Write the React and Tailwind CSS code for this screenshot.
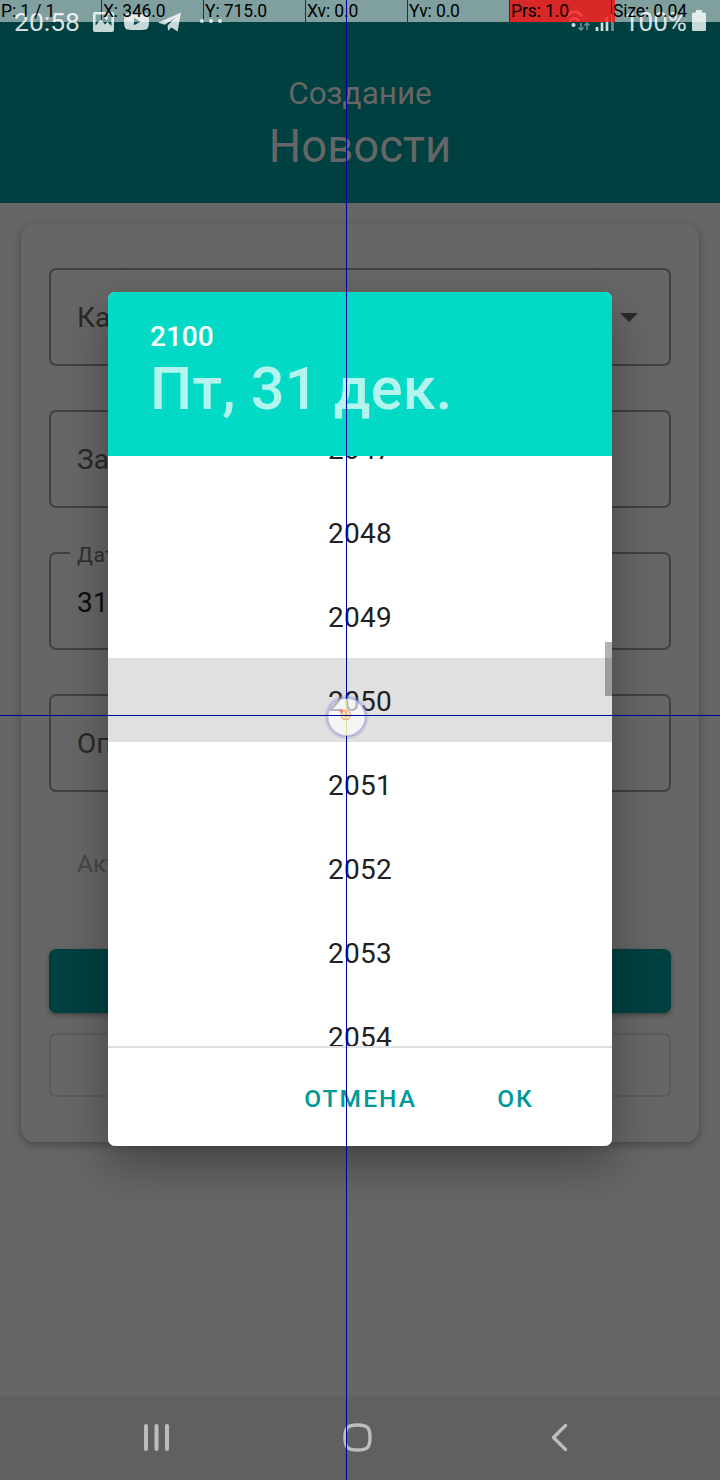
import React from "react";

const FIELD = "relative flex h-[98px] items-center rounded-[7px] border-2 border-[#404040] pl-[26px] pt-[2px] text-[28px] text-[#292929]";

const YEARS = [2047, 2048, 2049, 2050, 2051, 2052, 2053, 2054];

const STATS = ["P: 1 / 1", "X: 346.0", "Y: 715.0", "Xv: 0.0", "Yv: 0.0", "Prs: 1.0", "Size: 0.04"];

function StatusBar() {
  return (
    <div className="flex h-[44px] items-center justify-between pl-[14px] pr-[14px] text-left text-[#d5dfdf]">
      <div className="flex items-center">
        <span className="w-[78px] text-[26.5px] leading-[44px]">20:58</span>
        <svg className="h-[44px] w-[140px]" viewBox="92 0 140 44" fill="#c8d7d7">
          <path fillRule="evenodd" d="M95 12h17q2 0 2 2v16q0 2-2 2H95q-2 0-2-2V14q0-2 2-2Zm.6 2.6v11l5.400-6 4 5 2.500-2.800 3.900 4V14.600Z" />
          <circle cx="106.500" cy="18" r="1.800" />
          <path fillRule="evenodd" d="M127 13.500q9.500-1 19 0 3 .4 3 8t-3 8q-9.500 1-19 0-3-.4-3-8t3-8Zm7 4.200v7.600l6.500-3.800Z" />
          <path d="M158 22.800 181 12.600 177.600 31.500 171.500 27.500 168 30.800 167.600 25.500 175.500 17.500 165 24.800Z" />
          <circle cx="202" cy="21" r="2" />
          <circle cx="211" cy="21" r="2" />
          <circle cx="220" cy="21" r="2" />
        </svg>
      </div>
      <div className="flex items-center">
        <svg className="mr-[6px] h-[44px] w-[52px]" viewBox="566 0 52 44" fill="none">
          <path d="M566.500 16.500q8-9.500 16 0M569.500 21q5-5.500 9.500 0" stroke="#d5dfdf" strokeWidth="2.600" />
          <circle cx="573.500" cy="25" r="2" fill="#d5dfdf" />
          <path d="M581 23v7m-2.500-2.500L581 30l2.500-2.500M587 30v-7m-2.500 2.500L587 23l2.500 2.500" stroke="#6f9292" strokeWidth="1.500" />
          <path d="M597 27v4M602 22.500V31M607 17v14" stroke="#d5dfdf" strokeWidth="2.600" />
          <path d="M612.500 14v17" stroke="#6f9292" strokeWidth="2.600" />
        </svg>
        <span className="mr-[6px] w-[62px] whitespace-nowrap text-right text-[26px] leading-[44px]">100%</span>
        <svg className="h-[44px] w-[14px]" viewBox="692 0 14 44" fill="#c8d7d7">
          <path d="M696 10h6v2.500h2.500q1.500 0 1.500 1.500v15.500q0 1.500-1.500 1.500h-11q-1.500 0-1.500-1.500V14q0-1.500 1.500-1.500H696Z" />
        </svg>
      </div>
    </div>
  );
}

function PointerStats() {
  return (
    <div className="absolute left-0 top-0 grid h-[22px] w-[720px] grid-cols-[repeat(7,102px)] text-[17.5px] leading-[22px] tracking-[-0.12px] text-black">
      {STATS.map((s, i) => (
        <div key={s} className="flex pr-px">
          <div
            className={
              i === 5
                ? "w-[101px] whitespace-nowrap bg-[#ff2424]/85 pl-[1px]"
                : i === 6
                ? "w-[108px] shrink-0 whitespace-nowrap bg-[linear-gradient(to_right,rgba(255,34,34,.85)_3px,rgba(255,255,255,.5)_3px)] pl-[1px]"
                : "w-[101px] whitespace-nowrap bg-white/50 pl-[1px]"
            }
          >
            {s}
          </div>
        </div>
      ))}
    </div>
  );
}

function Form() {
  return (
    <div className="mx-[21px] mt-[21px] flex h-[918px] flex-col rounded-[14px] bg-[#666666] px-[28px] pt-[44px] shadow-[0_3px_8px_rgba(0,0,0,0.3)]">
      <div className="flex flex-col gap-[44px]">
        <div className={FIELD}>
          Ка
          <span className="mb-[1px] ml-auto mr-[31px] border-x-[9px] border-t-[9px] border-x-transparent border-t-[#292929]" />
        </div>
        <div className={FIELD}>За</div>
        <div className={FIELD}>
          <span className="absolute left-[19px] top-[-13px] bg-[#666666] px-[7px] text-[21px] leading-[28px] tracking-[0.6px] text-[#2d2d2d]">Дата</span>
          <span className="pt-[2px] text-[#0d0d0d]">31</span>
        </div>
        <div className={FIELD}>Оп</div>
      </div>
      <div className="flex h-[157px] items-center pb-[12px] pl-[28px] text-[24.5px] text-[#474747]">Акт</div>
      <div className="h-[64px] rounded-[7px] bg-[#004040] shadow-[0_2px_5px_rgba(0,0,0,0.35)]" />
      <div className="mt-[20px] h-[64px] rounded-[7px] border-2 border-[#5b5b5b]" />
    </div>
  );
}

function NavigationBar() {
  return (
    <div className="mt-auto h-[84px] bg-[#606060]">
      <svg className="h-[84px] w-[720px]" viewBox="0 1396 720 84" fill="none" stroke="#bdbdbd" strokeLinecap="round">
        <path d="M146 1426v23M156.500 1426v23M167 1426v23" strokeWidth="4" />
        <path d="M357.500 1425c10 0 12.500 2.500 12.500 12.500s-2.500 12.500-12.500 12.500-12.500-2.500-12.500-12.500 2.500-12.500 12.500-12.500Z" strokeWidth="3.400" />
        <path d="m565.500 1425.500-12 12 12 12" strokeWidth="3.400" strokeLinejoin="round" />
      </svg>
    </div>
  );
}

function DatePicker() {
  return (
    <div className="absolute left-[108px] top-[292px] flex h-[854px] w-[504px] flex-col overflow-hidden rounded-[7px] bg-white">
      <div className="h-[164px] shrink-0 bg-[#03dac6] pl-[42px] pt-[28px] font-medium">
        <div className="text-[28px] leading-[33px] text-white">2100</div>
        <div className="pt-px text-[59.5px] leading-[70px] tracking-[0.2px] text-[#b3f4ee]">Пт, 31 дек.</div>
      </div>
      <div className="relative h-[590px] shrink-0 overflow-hidden">
        <div className="-mt-[50px]">
          {YEARS.map((y) => (
            <div
              key={y}
              className={
                "flex h-[84px] items-center justify-center pt-[4px] text-[28px] tracking-[0.3px] text-[#212121] " +
                (y === 2050 ? "bg-[#e0e0e0]" : "")
              }
            >
              {y}
            </div>
          ))}
        </div>
        <div className="absolute right-0 top-[186px] h-[54px] w-[7px] bg-black/30" />
      </div>
      <div className="flex h-[100px] shrink-0 items-center justify-end gap-[80px] border-t-2 border-[#e0e0e0] pr-[78px] pt-[4px] text-[24.500px] font-medium tracking-[2.1px] text-[#009999]">
        <span>ОТМЕНА</span>
        <span>ОК</span>
      </div>
    </div>
  );
}

function TouchPointer() {
  return (
    <>
      <svg className="absolute left-[320px] top-[690px] h-[54px] w-[54px]" viewBox="320 690 54 54">
        <circle cx="346.500" cy="717" r="20.500" fill="none" stroke="#9c9ccc" strokeOpacity=".3" strokeWidth="3" />
        <circle cx="346.500" cy="717" r="19" fill="#fff" fillOpacity=".68" stroke="#a4a4da" strokeOpacity=".65" strokeWidth="2" />
        <path d="M346.500 699v36" stroke="#dedba0" strokeWidth="1" />
        <circle cx="345.800" cy="715" r="4.500" fill="#fbe8b8" stroke="#f1b17e" strokeWidth="1.300" />
        <path d="M339 709.500h4.500l-1.500 3.500h-1.500Z" fill="#ff7878" />
        <path d="M343 715h6M346 712v6" stroke="#c08b5a" strokeWidth="1" strokeDasharray="2 1" />
      </svg>
      <div className="absolute left-0 top-[715px] h-px w-[720px] bg-[#0000a0]" />
      <div className="absolute left-[346px] top-0 h-[699px] w-px bg-[#0000a0]" />
      <div className="absolute left-[346px] top-[736px] h-[744px] w-px bg-[#0000a0]" />
    </>
  );
}

export default function App() {
  return (
    <div className="relative flex h-[1480px] w-[720px] flex-col overflow-hidden bg-[#666666] font-[Roboto,sans-serif]">
      <header className="h-[203px] shrink-0 bg-[#004040] text-center text-[#666666]">
        <StatusBar />
        <div className="pt-[29px] text-[31.5px] leading-[42px]">Создание</div>
        <div className="pt-[4px] text-[45.5px] leading-[56px]">Новости</div>
      </header>
      <Form />
      <NavigationBar />
      <div className="absolute left-[108px] top-[292px] h-[854px] w-[504px] rounded-[7px] shadow-[0_20px_46px_rgba(0,0,0,0.32)]" />
      <DatePicker />
      <PointerStats />
      <TouchPointer />
    </div>
  );
}
